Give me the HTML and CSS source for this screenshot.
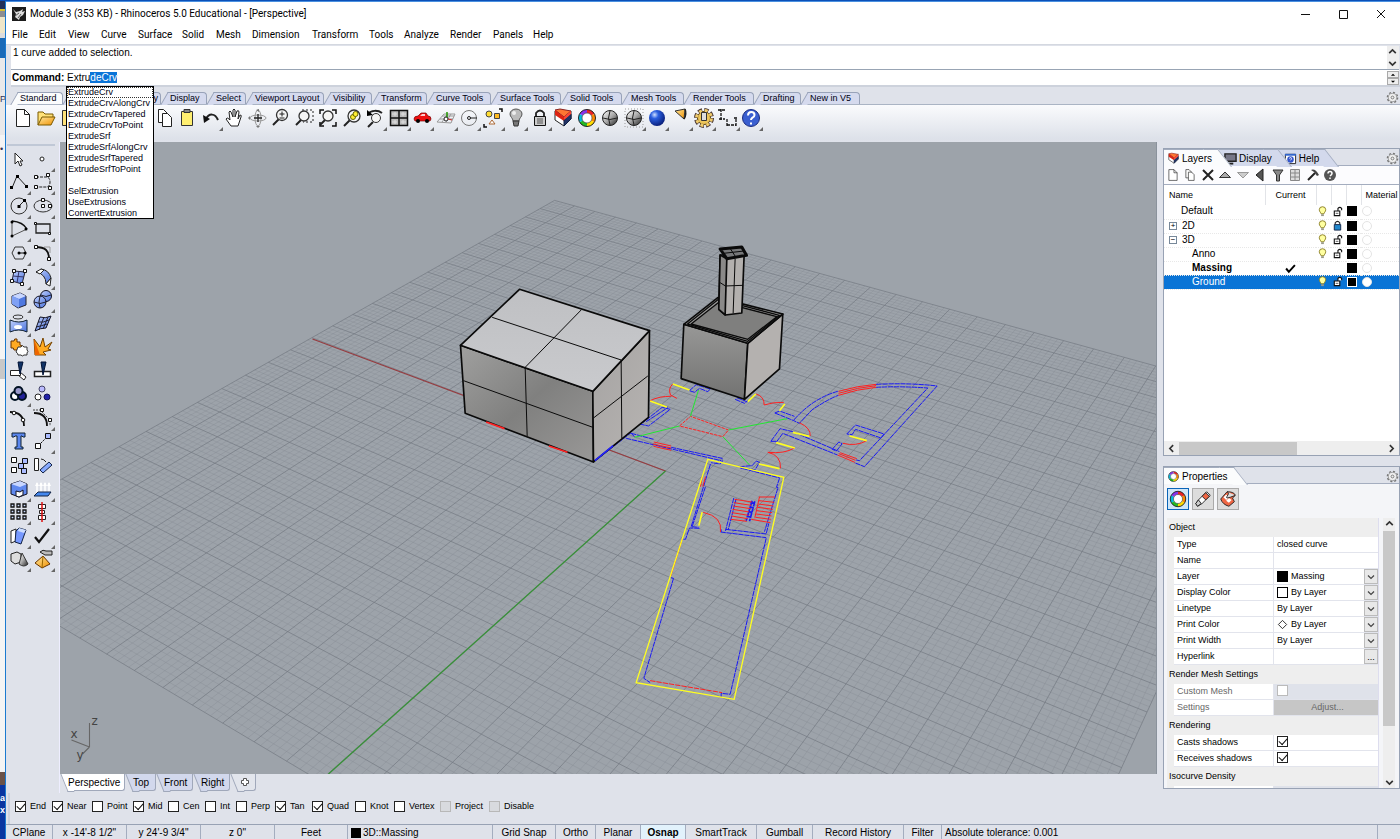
FILE: index.html
```html
<!DOCTYPE html>
<html lang="en">
<head>
<meta charset="utf-8">
<title>Module 3 (353 KB) - Rhinoceros 5.0 Educational - [Perspective]</title>
<link rel="stylesheet" href="styles.css">
</head>
<body>
<svg class="defs" aria-hidden="true">
<defs>
<linearGradient id="gball" x1="0" y1="0" x2="1" y2="1"><stop offset="0" stop-color="#fff"/><stop offset=".5" stop-color="#aaa"/><stop offset="1" stop-color="#222"/></linearGradient>
<radialGradient id="bball" cx=".35" cy=".3" r=".8"><stop offset="0" stop-color="#cfe0ff"/><stop offset=".3" stop-color="#2a5fe0"/><stop offset="1" stop-color="#04146a"/></radialGradient>
<linearGradient id="bface" x1="0" y1="0" x2="1" y2="1"><stop offset="0" stop-color="#c2d2ff"/><stop offset="1" stop-color="#4a72dc"/></linearGradient>
<linearGradient id="gold" x1="0" y1="0" x2="1" y2="1"><stop offset="0" stop-color="#ffe9a0"/><stop offset="1" stop-color="#f09000"/></linearGradient>
<linearGradient id="front" x1="0" y1="0" x2="1" y2="1"><stop offset="0" stop-color="#a0a09f"/><stop offset=".5" stop-color="#80807f"/><stop offset="1" stop-color="#999897"/></linearGradient>
<linearGradient id="boxf" x1="0" y1="0" x2="0" y2="1"><stop offset="0" stop-color="#989897"/><stop offset="1" stop-color="#727271"/></linearGradient>
<linearGradient id="side" x1="0" y1="0" x2="1" y2="1"><stop offset="0" stop-color="#a5a3a2"/><stop offset="1" stop-color="#b7b4b2"/></linearGradient>
<linearGradient id="roof" x1="0" y1="0" x2="0" y2="1"><stop offset="0" stop-color="#bfc0c3"/><stop offset="1" stop-color="#c9cacd"/></linearGradient>
<symbol id="wheel" viewBox="0 0 22 22"><g fill="none" stroke-width="4"><path stroke="#e22" d="M11 4.500a6.500 6.500 0 0 1 5.600 3.250"/><path stroke="#f80" d="M16.600 7.750a6.500 6.500 0 0 1 0 6.500"/><path stroke="#fd0" d="M16.600 14.250A6.500 6.500 0 0 1 11 17.500"/><path stroke="#2b2" d="M11 17.500a6.500 6.500 0 0 1-5.600-3.250"/><path stroke="#0bd" d="M5.400 14.250a6.500 6.500 0 0 1 0-6.500"/><path stroke="#83e" d="M5.400 7.750A6.500 6.500 0 0 1 11 4.500"/></g><circle cx="11" cy="11" r="8.500" fill="none" stroke="#222"/><circle cx="11" cy="11" r="5" fill="#fff" stroke="#444" stroke-width=".7"/></symbol>
<symbol id="layers" viewBox="0 0 22 22"><path d="M3 4l9 5 7-5v8l-7 7-9-6z" fill="#fff" stroke="#222"/><path d="M3 3l5-1 11 2-7 6z" fill="#f73" stroke="#822"/><path d="M3 3l9 7v4L3 8z" fill="#d21"/><path d="M12 13l7-6v5l-7 7z" fill="#236" stroke="#124"/><path d="M12 10l7-6v3l-7 6z" fill="#f43"/></symbol>
<symbol id="cog" viewBox="0 0 14 14"><circle cx="7" cy="7" r="5.500" fill="none" stroke="#777" stroke-width="1.500" stroke-dasharray="2.200 2.100"/><circle cx="7" cy="7" r="4.400" fill="#eee" stroke="#888" stroke-width=".8"/><circle cx="7" cy="7" r="1.500" fill="none" stroke="#777"/></symbol>
<symbol id="bulb" viewBox="0 0 10 12"><path d="M3.500 8.500C3 7 1.500 6 1.500 4a3.500 3.200 0 0 1 7 0c0 2-1.500 3-2 4.500z" fill="#ffffa0" stroke="#887c20"/><path d="M3.500 9h3v2h-3z" fill="#998"/></symbol>
<symbol id="unlock" viewBox="0 0 12 12"><path d="M2.500 5.500h6v5h-6zM6.500 5.500v-3q2-2 4 0v2" fill="#fff" stroke="#111" stroke-width="1.200"/><path d="M4 8h3" stroke="#555"/></symbol>
<symbol id="locked" viewBox="0 0 12 12"><path d="M3.500 5V3q2.500-3 5 0v2" fill="none" stroke="#222" stroke-width="1.200"/><path d="M2.500 5h7v6h-7z" fill="#28c" stroke="#124"/></symbol>
<symbol id="down" viewBox="0 0 10 10"><path d="M2 3.500l3 3 3-3" fill="none" stroke="#444" stroke-width="1.200"/></symbol>
<symbol id="page" viewBox="0 0 22 22"><path d="M4.500 2.500h8l5 5v12h-13z" fill="#fff" stroke="#222"/><path d="M12.500 2.500v5h5" fill="none" stroke="#222"/></symbol>
<symbol id="copy" viewBox="0 0 22 22"><path d="M4.500 2.500h5l4 4v9h-9z" fill="#fff" stroke="#222"/><path d="M8.500 6.500h5l4 4v9h-9z" fill="#fff" stroke="#222"/></symbol>
</defs>
</svg>
<div class="desktop">
<aside class="behind"><span class="peek-p">P</span><span class="peek-dot">•</span><span class="peek-a">a<br>xt</span></aside>
<div class="window">
<header class="titlebar">
<svg class="logo" viewBox="0 0 14 14"><path fill="#1c1c1c" d="M0 0h14v14H0z"/><path d="M1 2l3 3 4-1 3-2-1 3 3-1-2 4-3 2-1 3-4-3 1-3z" fill="#ddd"/><path d="M3 9l4-3M6 11l3-4" stroke="#555"/></svg>
<h1>Module 3 (353 KB) - Rhinoceros 5.0 Educational - [Perspective]</h1>
<div class="winbtns">
<button aria-label="Minimize"><svg viewBox="0 0 12 12"><path d="M2 6.500h9"/></svg></button>
<button aria-label="Maximize"><svg viewBox="0 0 12 12"><path d="M2.500 2.500h8v8h-8z"/></svg></button>
<button aria-label="Close"><svg viewBox="0 0 12 12"><path d="M2 2l8 8M10 2l-8 8"/></svg></button>
</div>
</header>
<nav class="menu"><a href="#">File</a><a href="#">Edit</a><a href="#">View</a><a href="#">Curve</a><a href="#">Surface</a><a href="#">Solid</a><a href="#">Mesh</a><a href="#">Dimension</a><a href="#">Transform</a><a href="#">Tools</a><a href="#">Analyze</a><a href="#">Render</a><a href="#">Panels</a><a href="#">Help</a></nav>
<section class="command">
<div class="history"><p>1 curve added to selection.</p><div class="hscroll"><svg viewBox="0 0 10 10"><path d="M2 6.500l3-3 3 3"/></svg><svg viewBox="0 0 10 10"><path d="M2 3.500l3 3 3-3"/></svg></div></div>
<div class="prompt"><label for="cmd">Command:</label><input id="cmd" type="text" value="ExtrudeCrv" autocomplete="off" spellcheck="false">
<div class="spin"><svg viewBox="0 0 11 6"><path d="M3 4.500h5L5.500 2z"/></svg><svg viewBox="0 0 11 6"><path d="M3 2h5L5.500 4.500z"/></svg></div>
<ul class="complete"><li class="current">ExtrudeCrv</li><li>ExtrudeCrvAlongCrv</li><li>ExtrudeCrvTapered</li><li>ExtrudeCrvToPoint</li><li>ExtrudeSrf</li><li>ExtrudeSrfAlongCrv</li><li>ExtrudeSrfTapered</li><li>ExtrudeSrfToPoint</li><li></li><li>SelExtrusion</li><li>UseExtrusions</li><li>ConvertExtrusion</li></ul>
</div>
</section>
<div class="tooltabs">
<button class="on">Standard</button><button aria-label="CPlanes"></button><button class="tail" aria-label="Visibility set">y</button><button>Display</button><button>Select</button><button>Viewport Layout</button><button>Visibility</button><button>Transform</button><button>Curve Tools</button><button>Surface Tools</button><button>Solid Tools</button><button>Mesh Tools</button><button>Render Tools</button><button>Drafting</button><button>New in V5</button>
<svg class="cog"><use href="#cog"/></svg>
</div>
<div class="toolbar">
<button aria-label="New"><svg viewBox="0 0 22 22"><use href="#page"/></svg></button>
<button aria-label="Open"><svg viewBox="0 0 22 22"><path d="M3 18V5h5l2 2h8v4" fill="#ffe27a" stroke="#7a5a00"/><path d="M3 18l4-8h13l-4 8z" fill="url(#gold)" stroke="#7a5a00"/></svg></button>
<button aria-label="Save"><svg viewBox="0 0 22 22"><path d="M3.500 3.500h15v15h-15z" fill="#ffe27a" stroke="#333"/></svg></button>
<button aria-label="Print"></button><button aria-label="Properties"></button><button aria-label="Cut"></button>
<button aria-label="Copy"><svg viewBox="0 0 22 22"><use href="#copy" x="1"/></svg></button>
<button aria-label="Paste"><svg viewBox="0 0 22 22"><path d="M5.500 4.500h11v14h-11z" fill="#ffef70" stroke="#333"/><path d="M8 2.500h6v3H8z" fill="#888" stroke="#333"/></svg></button>
<button class="fly" aria-label="Undo"><svg viewBox="0 0 22 22"><path d="M6 12c3-6 9-6 12 1" fill="none" stroke="#222" stroke-width="2"/><path d="M3 8l1 8 6-4z" fill="#111"/></svg></button>
<button aria-label="Pan"><svg viewBox="0 0 22 22"><path d="M8 19l-5-7q1-2 3 0l1 1L6 5q1-2 2 0l2 5V3q1-2 2 0v7l2-6q2-1 2 1l-1 7 2-4q2 0 1 2l-3 9z" fill="#fff" stroke="#222"/></svg></button>
<button aria-label="Rotate view"><svg viewBox="0 0 22 22"><g fill="none" stroke="#999"><ellipse cx="11" cy="11" rx="8" ry="3"/><ellipse cx="11" cy="11" rx="3" ry="8"/></g><path d="M11 7v8M7 11h8" stroke="#222" stroke-width="1.300"/><path d="M9 3l3-1v3zM9 19h4l-2 2zM3 9v4L1 11z" fill="#777"/></svg></button>
<button aria-label="Zoom"><svg viewBox="0 0 22 22"><path d="M9 12l-6 6" stroke="#222" stroke-width="2"/><circle cx="12" cy="8" r="5.500" fill="#f5f5f5" stroke="#333" stroke-width="1.300"/><path d="M9.500 7h5M12 4.500v5M9.500 11h5" stroke="#222"/></svg></button>
<button aria-label="Zoom window"><svg viewBox="0 0 22 22"><path d="M8 3h11v12H9" fill="none" stroke="#222" stroke-dasharray="2 2"/><path d="M7 13l-5 5" stroke="#222" stroke-width="2"/><circle cx="10" cy="9" r="5" fill="#f5f5f5" stroke="#333" stroke-width="1.300"/></svg></button>
<button aria-label="Zoom extents"><svg viewBox="0 0 22 22"><path d="M3 7V3h4M15 3h4v4M19 15v4h-4M7 19H3v-4" fill="none" stroke="#111" stroke-width="1.500"/><path d="M8 13l-5 5" stroke="#222" stroke-width="2"/><circle cx="11" cy="9" r="5" fill="#f5f5f5" stroke="#333" stroke-width="1.300"/></svg></button>
<button aria-label="Zoom selected"><svg viewBox="0 0 22 22"><path d="M9 13l-6 6" stroke="#222" stroke-width="2"/><circle cx="13" cy="9" r="6" fill="#f5f5f5" stroke="#333" stroke-width="1.300"/><circle cx="12" cy="10" r="2.500" fill="#fe3" stroke="#660"/><circle cx="14.500" cy="7" r="2.500" fill="#fe3" stroke="#660"/></svg></button>
<button class="fly" aria-label="Undo view"><svg viewBox="0 0 22 22"><path d="M4 7c3-4 10-4 14-1" fill="none" stroke="#222" stroke-width="2"/><path d="M3 3v6l6-1z"/><path d="M9 15l-5 5" stroke="#222" stroke-width="2"/><circle cx="12" cy="11" r="4.500" fill="#f5f5f5" stroke="#333"/></svg></button>
<button class="fly" aria-label="Viewports"><svg viewBox="0 0 22 22"><path d="M2.500 3.500h17v15h-17z" fill="#bbb" stroke="#111" stroke-width="1.500"/><path d="M11 3v16M2 11h18" stroke="#111" stroke-width="1.500"/><path d="M4 7h5M13 7h5M4 15h5M13 15h5M7 5v4M15 5v4M7 13v4M15 13v4" stroke="#ddd"/></svg></button>
<button class="fly" aria-label="Set view"><svg viewBox="0 0 22 22"><path d="M3 12q0-3 4-3l3-3h5l2 3q3 0 3 3l-1 2H4z" fill="#e11" stroke="#700" stroke-width=".7"/><path d="M9 9l2-2h3v2z" fill="#fcc"/><circle cx="7" cy="14" r="2"/><circle cx="16" cy="14" r="2"/></svg></button>
<button class="fly" aria-label="CPlane"><svg viewBox="0 0 22 22"><path d="M2 15L9 7h11l-4 9zM5 12h13M7 9h12M7 15l6-8M11 15l5-8" fill="none" stroke="#999"/><path d="M12 11V5" stroke="#290" stroke-width="1.500"/><circle cx="11" cy="12" r="2" fill="#fff" stroke="#222"/><path d="M13 12l4 1" stroke="#c22"/></svg></button>
<button class="fly" aria-label="Circle center"><svg viewBox="0 0 22 22"><circle cx="11" cy="11" r="7.500" fill="none" stroke="#777"/><circle cx="11" cy="11" r="1.500" fill="none" stroke="#222"/><path d="M12 11h7" stroke="#222"/></svg></button>
<button class="fly" aria-label="Select"><svg viewBox="0 0 22 22"><path d="M17 2h3v3M2 17v3h3" fill="none" stroke="#111" stroke-width="1.500"/><circle cx="7" cy="7" r="3" fill="#fd3" stroke="#444"/><path d="M12.500 6.500h5v5h-5z" fill="#fb2" stroke="#444"/><path d="M13 17l-3-4-3 4z" fill="#fff" stroke="#a63"/></svg></button>
<button class="fly" aria-label="Hide"><svg viewBox="0 0 22 22"><path d="M8 14c0-3-3-4-3-7a6 5 0 0 1 12 0c0 3-3 4-3 7z" fill="#bbb" stroke="#555"/><circle cx="9" cy="6" r="2" fill="#eee"/><path d="M8 14h6l-1 5H9z" fill="#777" stroke="#333"/></svg></button>
<button class="fly" aria-label="Lock"><svg viewBox="0 0 22 22"><path d="M7 9V6q4-5 8 0v3" fill="none" stroke="#222" stroke-width="1.800"/><path d="M5.500 9.500h11v9h-11z" fill="#ccc" stroke="#111"/><path d="M8 12h6M8 14h6M8 16h6" stroke="#555"/></svg></button>
<button class="fly" aria-label="Layers"><svg viewBox="0 0 22 22"><use href="#layers"/></svg></button>
<button class="fly" aria-label="Colors"><svg viewBox="0 0 22 22"><use href="#wheel"/></svg></button>
<button aria-label="Shaded"><svg viewBox="0 0 22 22"><circle cx="11" cy="11" r="7.500" fill="url(#gball)" stroke="#222"/><path d="M4 11q7 3 14 0M11 4q-3 7 0 14" fill="none" stroke="#222"/></svg></button>
<button class="fly" aria-label="Ghosted"><svg viewBox="0 0 22 22"><path d="M2 2h18v18H2z" fill="none" stroke="#999" stroke-dasharray="1 2"/><circle cx="11" cy="11" r="7.500" fill="url(#gball)" stroke="#222"/><path d="M4 11q7 3 14 0M11 4q-3 7 0 14" fill="none" stroke="#222"/></svg></button>
<button class="fly" aria-label="Render"><svg viewBox="0 0 22 22"><circle cx="11" cy="11" r="8" fill="url(#bball)"/></svg></button>
<button class="fly" aria-label="Spotlight"><svg viewBox="0 0 22 22"><path d="M5 4l10-2-1 10z" fill="url(#gold)" stroke="#333"/><path d="M15 2q2 5-1 10" fill="none" stroke="#222" stroke-width="1.500"/></svg></button>
<button class="fly" aria-label="Options"><svg viewBox="0 0 22 22"><circle cx="11" cy="11" r="7.500" fill="none" stroke="#433" stroke-width="5" stroke-dasharray="3.900 2"/><circle cx="11" cy="11" r="6.500" fill="#edc55a" stroke="#5a4210"/><circle cx="11" cy="11" r="7.500" fill="none" stroke="#f0cc6c" stroke-width="3" stroke-dasharray="2.900 3" stroke-dashoffset="-.5"/><path d="M8.500 5.500h5v8h-5z" fill="#ddd" stroke="#333"/></svg></button>
<button class="fly" aria-label="Dimension"><svg viewBox="0 0 22 22"><path d="M4 2v11M1 3h7M2 12h6M10 12v8M19 12v8M10 18h9M17 11h4" fill="none" stroke="#111" stroke-width="1.300" stroke-dasharray="3 1"/></svg></button>
<button class="fly" aria-label="Help"><svg viewBox="0 0 22 22"><circle cx="11" cy="11" r="8.500" fill="#3a5fd0" stroke="#1a2c80"/><path d="M8 8.500q0-3.500 3.200-3.500 3.300 0 3.300 3 0 1.500-2 2.700-1.500 1-1.500 2.300M11 15.500v2" fill="none" stroke="#fff" stroke-width="2"/></svg></button>
</div>
<main class="work">
<div class="sidebar">
<button aria-label="Pointer"><svg viewBox="0 0 22 22"><path d="M7 5v11l3-3 2 5 2-1-2-4h3z" fill="#fff" stroke="#222"/></svg></button>
<button class="fly" aria-label="Point"><svg viewBox="0 0 22 22"><circle cx="10" cy="11" r="2" fill="#fff" stroke="#222"/></svg></button>
<button class="fly" aria-label="Polyline"><svg viewBox="0 0 22 22"><path d="M4 17L9 5l10 11" fill="none" stroke="#222"/><path d="M2 15h3v3H2zM8 4h3v3H8zM17 14h3v3h-3z"/></svg></button>
<button class="fly" aria-label="Curve"><svg viewBox="0 0 22 22"><path d="M4 6h10q4 0 4 5t-4 5H4" fill="none" stroke="#222" stroke-dasharray="3 1"/><path d="M2.500 4.500h3v3h-3zM14.500 2.500h3v3h-3zM2.500 14.500h3v3h-3zM16.500 15.500h3v3h-3z" fill="#fff" stroke="#111"/></svg></button>
<button class="fly" aria-label="Circle"><svg viewBox="0 0 22 22"><circle cx="11" cy="11" r="8" fill="none" stroke="#333"/><path d="M11 11l5-5" stroke="#222"/><path d="M9.500 10h3v3h-3zM15 4h3v3h-3z"/></svg></button>
<button class="fly" aria-label="Ellipse"><svg viewBox="0 0 22 22"><ellipse cx="11" cy="11" rx="9" ry="6" fill="none" stroke="#333"/><path d="M9.500 9.500h3v3h-3zM9.500 3.500h3v3h-3zM16.500 9.500h3v3h-3z" fill="#fff" stroke="#111"/></svg></button>
<button class="fly" aria-label="Arc"><svg viewBox="0 0 22 22"><path d="M4 3v15l15-7" fill="none" stroke="#555"/><path d="M4 3q11 1 15 8" fill="none" stroke="#111" stroke-width="1.300"/><circle cx="4" cy="4" r="1.500"/><circle cx="4" cy="18" r="1.500"/><circle cx="18" cy="11" r="1.500"/></svg></button>
<button class="fly" aria-label="Rectangle"><svg viewBox="0 0 22 22"><path d="M4 6h14v9H4z" fill="none" stroke="#222" stroke-width="1.300"/><path d="M2.500 4.500h2v2h-2zM16.500 14.500h2v2h-2z" fill="#fff" stroke="#111"/></svg></button>
<button class="fly" aria-label="Polygon"><svg viewBox="0 0 22 22"><path d="M4 11l3-6h8l3 6-3 6H7z" fill="none" stroke="#333"/><path d="M11 11h6" stroke="#111"/><circle cx="11" cy="11" r="1.500"/><circle cx="17" cy="11" r="1.500"/></svg></button>
<button class="fly" aria-label="Fillet"><svg viewBox="0 0 22 22"><path d="M12 5h6v6" fill="none" stroke="#999"/><path d="M3 5c11 0 14 4 14 12" fill="none" stroke="#111" stroke-width="1.800"/><path d="M2.500 3.500h3v3h-3zM15.500 15.500h3v3h-3z" fill="#fff" stroke="#111"/></svg></button>
<button class="fly" aria-label="Surface"><svg viewBox="0 0 22 22"><path d="M6 5l11 1-3 12-10-3z" fill="url(#bface)" stroke="#223"/><path d="M11 5l-2 12M5 10l11 1" stroke="#336"/><path d="M4.500 3.500h3v3h-3zM15.500 3.500h3v3h-3zM2.500 13.500h3v3h-3zM12.500 16.500h3v3h-3z" fill="#fff" stroke="#111"/></svg></button>
<button class="fly" aria-label="Sweep"><svg viewBox="0 0 22 22"><path d="M4 6q3 0 5-3 8 1 10 9l-5 6q0-10-10-12z" fill="url(#bface)" stroke="#222"/><path d="M4 6l5-3 3 1-4 4zM14 18l5-6-1 8z" fill="#fff" stroke="#222"/></svg></button>
<button class="fly" aria-label="Box"><svg viewBox="0 0 22 22"><path d="M4 7l8-3 6 3v9l-8 3-6-4z" fill="#4f78e0" stroke="#223"/><path d="M4 7l8-3 6 3-7 3z" fill="#c8d6ff"/><path d="M4 7l7 3v9l-7-4z" fill="#7fa0f4"/></svg></button>
<button class="fly" aria-label="Boolean"><svg viewBox="0 0 22 22"><circle cx="14" cy="7" r="5.500" fill="url(#bface)" stroke="#112"/><circle cx="8" cy="13" r="6" fill="url(#bface)" stroke="#112"/><path d="M2 13q6 3 12 0M8 7q-2 6 0 12M9 6q5 3 10 0" fill="none" stroke="#223"/></svg></button>
<button class="fly" aria-label="Loft"><svg viewBox="0 0 22 22"><ellipse cx="10" cy="4" rx="5" ry="2" fill="none" stroke="#333"/><path d="M2 7q9 4 17 0v12q-8-4-17 0z" fill="url(#bface)" stroke="#123"/><ellipse cx="10" cy="14" rx="4" ry="2" fill="#fff"/></svg></button>
<button class="fly" aria-label="Mesh"><svg viewBox="0 0 22 22"><path d="M8 4q5 2 11-1l-5 12q-6 0-11 3z" fill="url(#bface)" stroke="#112"/><path d="M6 9q5 1 11-2M4 14q5-1 11-3M12 4l-5 13M16 4l-5 12" fill="none" stroke="#223"/></svg></button>
<button aria-label="Join"><svg viewBox="0 0 22 22"><path d="M3 5h3q0-3 3-2v3h3v3q3 0 2 3h-3l-2 2H6q0-3-3-2z" fill="#fa2" stroke="#630"/><path d="M10 11h3q1-3 3 0h3v3q2 1 0 3v2h-3q-2 2-3 0h-3q0-2-2-3z" fill="#fff" stroke="#333"/></svg></button>
<button aria-label="Explode"><svg viewBox="0 0 22 22"><path d="M2 3l6 8 3-9 2 9 7-5-4 7 3 1-8 2 3 3H3z" fill="#fa2" stroke="#740"/><path d="M2 3l1 16h5z" fill="#e60"/></svg></button>
<button aria-label="Trim"><svg viewBox="0 0 22 22"><path d="M2.500 10.500h10v5h-10zM12 12l6 5-2 3-6-5" fill="#fff" stroke="#222"/><path d="M10 2h5l-3 12z" fill="#136" stroke="#013"/></svg></button>
<button aria-label="Split"><svg viewBox="0 0 22 22"><path d="M2.500 11.500h16v5h-16z" fill="#fff" stroke="#222" stroke-width="1.500"/><path d="M9 2h5l-3 13z" fill="#136" stroke="#013"/></svg></button>
<button class="fly" aria-label="Group"><svg viewBox="0 0 22 22"><g stroke="#012" stroke-width="2"><circle cx="7" cy="13" r="4" fill="#fff"/><circle cx="14" cy="13" r="4" fill="#229"/><circle cx="10.500" cy="8" r="4" fill="#99c"/></g></svg></button>
<button aria-label="Ungroup"><svg viewBox="0 0 22 22"><circle cx="10" cy="6" r="3" fill="#bbf" stroke="#446"/><circle cx="6" cy="14" r="3" fill="#fff" stroke="#222"/><circle cx="15" cy="14" r="3" fill="#22a" stroke="#115"/></svg></button>
<button aria-label="Edit points"><svg viewBox="0 0 22 22"><path d="M2 5q14 0 14 14" fill="none" stroke="#111" stroke-width="1.800"/><circle cx="6" cy="6" r="1.800" fill="#fff" stroke="#111"/><circle cx="15" cy="13" r="1.800" fill="#fff" stroke="#111"/></svg></button>
<button class="fly" aria-label="Control points"><svg viewBox="0 0 22 22"><path d="M2 6q13 0 13 13" fill="none" stroke="#111" stroke-width="1.800"/><path d="M1 3h7l10 10v6" fill="none" stroke="#444" stroke-dasharray="2 1"/><path d="M8.500 1.500h3v3h-3zM16.500 11.500h3v3h-3z" fill="#fff" stroke="#111"/></svg></button>
<button aria-label="Text"><svg viewBox="0 0 22 22"><path d="M4 3h13v4h-2l-1-1h-1v11h2v2H7v-2h2V6H7L6 7H4z" fill="#5b86ee" stroke="#123"/></svg></button>
<button class="fly" aria-label="Move"><svg viewBox="0 0 22 22"><path d="M13.500 3.500h5v5h-5z" fill="#abf" stroke="#111"/><path d="M3.500 13.500h5v5h-5z" fill="#fff" stroke="#111"/><path d="M9 13l4-4" stroke="#111" stroke-dasharray="2 1"/></svg></button>
<button aria-label="Copy objects"><svg viewBox="0 0 22 22"><path d="M3.500 3.500h5v5h-5zM3.500 13.500h5v5h-5z" fill="#fff" stroke="#111"/><path d="M14.500 4.500h5v5h-5zM10.500 9.500h5v5h-5zM13.500 14.500h5v5h-5z" fill="#abf" stroke="#111"/></svg></button>
<button aria-label="Rotate"><svg viewBox="0 0 22 22"><path d="M2.500 4.500h4v12h-4z" fill="#fff" stroke="#222"/><path d="M8 16l9-8 3 3-9 8z" fill="#8af" stroke="#124"/><path d="M9 5q3 0 5 3" fill="none" stroke="#222"/></svg></button>
<button class="fly" aria-label="Solid edit"><svg viewBox="0 0 22 22"><path d="M3 6l9-3 7 3v10l-8 3-8-3z" fill="#5f88ee" stroke="#112"/><path d="M3 6l9-3 7 3-7 3z" fill="#c8d6ff"/><path d="M8 13l4 1 3-2v5l-4 2-3-1z" fill="#fff" stroke="#112"/></svg></button>
<button class="fly" aria-label="Project"><svg viewBox="0 0 22 22"><path d="M5 15V5M9 15V5M13 15V5M17 15V5" stroke="#fff" stroke-width="1.500"/><path d="M3 8l2-4 2 4zM7 8l2-4 2 4zM11 8l2-4 2 4zM15 8l2-4 2 4z" fill="#fff"/><path d="M2 18l4-4h13l-3 4z" fill="#48e" stroke="#124"/></svg></button>
<button class="fly" aria-label="Array"><svg viewBox="0 0 22 22"><g fill="#cdf" stroke="#111" stroke-width="1.300"><path d="M3 3h3v3H3zM9 3h3v3H9zM15 3h3v3h-3zM3 9h3v3H3zM9 9h3v3H9zM15 9h3v3h-3zM3 15h3v3H3zM9 15h3v3H9zM15 15h3v3h-3z"/></g></svg></button>
<button class="fly" aria-label="Align"><svg viewBox="0 0 22 22"><path d="M6.500 3.500h7v4h-7zM7.500 9.500h5v3h-5zM6.500 14.500h7v4h-7z" fill="#fff" stroke="#222"/><path d="M10 1v20" stroke="#d11" stroke-width="1.500"/></svg></button>
<button class="fly" aria-label="Orient"><svg viewBox="0 0 22 22"><path d="M3 6l5-2v12l-5 2z" fill="#fff" stroke="#222"/><path d="M8 6l3-3 7 2-5 14-6-2z" fill="#79f" stroke="#124"/><path d="M11 3l7 2-2 3-6-2z" fill="#cdf"/></svg></button>
<button class="fly" aria-label="Check"><svg viewBox="0 0 22 22"><path d="M3 12l4 5L17 4" fill="none" stroke="#111" stroke-width="2.200"/></svg></button>
<button class="fly" aria-label="Primitives"><svg viewBox="0 0 22 22"><path d="M3 6l6-2 4 2v8l-6 2-4-3z" fill="#ddd" stroke="#222"/><path d="M14 5l6 11q-4 4-9 0z" fill="url(#gball)" stroke="#333"/></svg></button>
<button class="fly" aria-label="Render tools"><svg viewBox="0 0 22 22"><path d="M3 15l8-7 7 8-8 4z" fill="url(#gold)" stroke="#630"/><path d="M11 8l-1 12" stroke="#960"/><path d="M8 4q3-3 6-1h6v4h-7z" fill="#bbb" stroke="#222"/></svg></button>
</div>
<div class="center">
<svg class="viewport" viewBox="60 142 1097 632" preserveAspectRatio="xMidYMid slice" role="img" aria-label="Perspective viewport">
<rect x="60" y="142" width="1097" height="632" fill="#9da3aa"/>
<path id="minor" fill="none" stroke="#858b92" stroke-width="1" stroke-opacity=".36"/>
<path id="major" fill="none" stroke="#747982" stroke-width="1" stroke-opacity=".7"/>
<path d="M666 471L313 339" stroke="#963c40" stroke-width="1.300"/><path d="M666 471L329 774" stroke="#389038" stroke-width="1.300"/>
<g fill="none" stroke="#666" stroke-width="1.100"><path d="M90 747v-24M90 747l-18-7M90 747l-7 7"/></g>
<g class="axis"><text x="92" y="725">z</text><text x="71" y="738">x</text><text x="77" y="759">y</text></g>
<g transform="translate(600 370) scale(.3333)" fill="none" stroke-width="3">
<g stroke="#1818f4" stroke-dasharray="16 2">
<path d="M0 262L95 188M80 205L365 272M95 190L162 208M215 232L368 265V275L362 282L335 278M95 190l10 10M120 162L147 168L212 118L188 112L130 158M140 155l65-42"/>
<path d="M270 62L290 44L332 57L325 65L300 55L285 67zM407 88l28 12 10-8M412 83l30 12"/>
<path d="M526 129L583 152L600 160L637 120Q690 85 717 76M583 150Q640 85 715 64M526 129l14-6 45 16M830 43Q930 38 1013 48L795 290L765 278M830 52Q900 48 985 54L780 272L770 270"/>
<path d="M514 214L542 176L580 185L720 245M530 217L550 190L714 255M514 214h16M698 238l20-22 10 5-17 22z"/>
<path d="M742 192L768 165L854 192L845 204L768 178L758 194z"/>
<path d="M420 290l38-3 12-14 10 4-13 22-44-5 118 30M540 325l-9 27 8 2"/>
<path d="M333 282L275 470L297 472M318 350l-40 120M300 475L270 474L258 508L248 508M222 625L133 925L152 938M222 625l-8 -2M500 505L392 973L365 970V980M535 355L495 485"/>
<path d="M403 384L378 483M410 386L386 480M378 478L500 492L508 460M363 486L500 503M365 478v8"/>
<path d="M458 392l-18 60M466 394l-16 60M453 397l12 4M450 410l12 4M446 424l12 4M442 438l12 4" stroke-width="5"/>
</g>
<g stroke="#ff2020">
<path d="M240 168L273 139L387 180L370 200z" stroke-dasharray="10 3"/>
<path d="M160 222l55 12M162 229l53 12M163 216l52 12M220 42Q205 55 213 75L232 85M152 92Q180 78 215 79M470 72Q495 80 494 105Q520 96 553 97M600 158Q635 175 632 198M505 247Q545 255 543 295M585 234Q555 252 505 247M802 212Q770 230 730 220"/>
<path d="M717 76Q775 57 830 52M717 64Q775 47 830 43M717 70Q775 52 830 47M714 255l52 22M722 248l50 18M718 251l50 20"/>
<path d="M308 320L303 350M318 320l-8 30M248 508L213 620M311 427Q370 440 363 486"/><path d="M152 932L368 968" stroke-dasharray="16 3"/>
<path d="M405 388l52 8M403 398l52 8M401 408l52 8M399 418l50 8M397 428l50 8M396 438l48 8M394 448l48 6M478 381h48M478 392l46 5M476 402l46 6M474 412l46 6M472 422l46 6M470 432l46 6M468 442l46 6M455 448l58 10M480 381l-14 62"/>
</g>
<g stroke="#20e830"><path d="M273 139L297 60M387 180L563 146M370 200L450 285M240 168L105 202"/></g>
<g stroke="#ffff20" stroke-width="5"><path d="M220 42l50 18M152 93l50 18M445 95l24-23M540 122l16-20M580 187l50 12M530 218l56 16M750 198l52 14M478 282l62 14M308 427l-10 40"/><path d="M325 268L553 322L404 988L110 938z" stroke-width="4"/></g>
</g>
<g transform="translate(440 230) scale(.3333)" fill="none" stroke="#0a0a0a" stroke-width="5" stroke-linejoin="round">
<path d="M63 346L460 484L462 696L77 550z" fill="url(#front)"/>
<path d="M460 484L630 302L627 562L462 696z" fill="url(#side)"/>
<path d="M240 178L630 302L460 484L63 346z" fill="url(#roof)"/>
<g stroke-width="3"><path d="M158 262L545 390L547 625M425 240L257 412L263 618M72 452L460 592M462 564L625 438"/></g>
<path d="M140 576l55 20M328 648l56 19" stroke="#f22"/><path d="M466 692l55-45" stroke="#22f"/>
<path d="M733 283L925 340L915 508L725 446z" fill="url(#boxf)"/>
<path d="M925 340L1030 252L1020 417L915 508z" fill="#b4b1af"/>
<path d="M733 283L835 203L1030 252L925 340z" fill="#9c9c9b"/>
<path d="M755 282L840 215L1012 260L925 328z" fill="#7f7f7e" stroke-width="4"/>
<path d="M744 282L837 208L1020 256L925 334z" stroke-width="4"/>
<path d="M842 75L838 238L857 255L907 249L914 75z" fill="#b3b0ae" stroke-width="5"/>
<path d="M842 75L838 238L857 255L862 86z" fill="#8a8988" stroke-width="5"/>
<path d="M887 86L881 250M842 158L858 168L910 166" stroke-width="3"/>
<path d="M842 57L907 51L921 76L862 86z" fill="#77787a" stroke-width="9"/><path d="M852 70l62-7M872 55l18 28" stroke-width="3"/>
</g>
</svg>
<div class="viewtabs"><button class="on">Perspective</button><button>Top</button><button>Front</button><button>Right</button><button aria-label="Add viewport"><svg viewBox="0 0 10 10"><path d="M3.500 1.500h3v2h2v3h-2v2h-3v-2h-2v-3h2z" fill="#fff" stroke="#555"/></svg></button></div>
</div>
<aside class="panels">
<section class="panel layers">
<div class="ptabs"><button class="on"><svg><use href="#layers"/></svg>Layers</button><button><svg viewBox="0 0 14 14"><path d="M1 2h12v8H1z" fill="#778" stroke="#222" stroke-width="1.500"/><path d="M4 12.500h6" stroke="#222" stroke-width="2"/></svg>Display</button><button><svg viewBox="0 0 14 14"><path d="M1.500 2.500h11v10h-11z" fill="#fff" stroke="#222"/><path d="M1 2h12v2H1z" fill="#36c"/><circle cx="7" cy="8" r="3.500" fill="#35c"/><path d="M6 7q0-1 1-1t1 1q0 1-1 2" stroke="#fff" fill="none"/></svg>Help</button><svg class="cog"><use href="#cog"/></svg></div>
<div class="ptools">
<button aria-label="New layer"><svg><use href="#page"/></svg></button>
<button aria-label="New sublayer"><svg><use href="#copy"/></svg></button>
<button aria-label="Delete"><svg viewBox="0 0 14 14"><path d="M2 2l10 10M12 2L2 12" stroke="#222" stroke-width="2"/></svg></button>
<button aria-label="Up"><svg viewBox="0 0 14 14"><path d="M1.500 9.500L7 4l5.500 5.500z" fill="#aaa" stroke="#333"/></svg></button>
<button aria-label="Down"><svg viewBox="0 0 14 14"><path d="M1.500 4.500L7 10l5.500-5.500z" fill="#ccc" stroke="#999"/></svg></button>
<button aria-label="Left"><svg viewBox="0 0 14 14"><path d="M10 1v12L3 7z" fill="#555" stroke="#222"/></svg></button>
<button aria-label="Filter"><svg viewBox="0 0 14 14"><path d="M2 2h10L8.500 7v6h-3V7z" fill="#888" stroke="#333"/></svg></button>
<button aria-label="Columns"><svg viewBox="0 0 14 14"><path d="M2.500 1.500h9v11h-9zM2 5h9M2 9h9M7 2v10" fill="#ddd" stroke="#888"/></svg></button>
<button aria-label="Tools"><svg viewBox="0 0 14 14"><path d="M2 12l7-7" stroke="#222" stroke-width="2"/><path d="M5 2q4-2 8 5l-2 1-3-4z" fill="#444"/></svg></button>
<button aria-label="Help"><svg viewBox="0 0 14 14"><circle cx="7" cy="7" r="6" fill="#555"/><path d="M5 5.500Q5 3.500 7 3.500t2 2q0 1-2 2.500M7 9.500v1.500" fill="none" stroke="#fff" stroke-width="1.500"/></svg></button>
</div>
<table>
<colgroup><col class="c-name"><col class="c-cur"><col class="c-i"><col class="c-i"><col class="c-i"><col></colgroup>
<thead><tr><th>Name</th><th class="mid">Current</th><th></th><th></th><th></th><th class="mat">Material</th></tr></thead>
<tbody>
<tr><td class="l1">Default</td><td></td><td><svg><use href="#bulb"/></svg></td><td><svg><use href="#unlock"/></svg></td><td><i class="sw"></i></td><td><i class="ball"></i></td></tr>
<tr><td><button class="tw" aria-label="Expand 2D">+</button>2D</td><td></td><td><svg><use href="#bulb"/></svg></td><td><svg><use href="#locked"/></svg></td><td><i class="sw"></i></td><td><i class="ball"></i></td></tr>
<tr><td><button class="tw" aria-label="Collapse 3D">−</button>3D</td><td></td><td><svg><use href="#bulb"/></svg></td><td><svg><use href="#unlock"/></svg></td><td><i class="sw"></i></td><td><i class="ball"></i></td></tr>
<tr><td class="l2">Anno</td><td></td><td><svg><use href="#bulb"/></svg></td><td><svg><use href="#unlock"/></svg></td><td><i class="sw"></i></td><td><i class="ball"></i></td></tr>
<tr><td class="l2 strong">Massing</td><td class="mid"><svg viewBox="0 0 10 10"><path d="M1 5l2.500 3L9 2" fill="none" stroke="#000" stroke-width="1.800"/></svg></td><td></td><td></td><td><i class="sw"></i></td><td><i class="ball"></i></td></tr>
<tr class="sel"><td class="l2">Ground</td><td></td><td><svg><use href="#bulb"/></svg></td><td><svg><use href="#unlock"/></svg></td><td><i class="sw"></i></td><td><i class="ball"></i></td></tr>
</tbody>
</table>
<div class="xscroll"><svg viewBox="0 0 10 10"><path d="M6.500 2l-3 3 3 3"/></svg><i></i><svg viewBox="0 0 10 10"><path d="M3.500 2l3 3-3 3"/></svg></div>
</section>
<section class="panel props">
<div class="ptabs"><button class="on"><svg><use href="#wheel"/></svg>Properties</button><svg class="cog"><use href="#cog"/></svg></div>
<div class="ptypes">
<button class="on" aria-label="Object"><svg><use href="#wheel"/></svg></button>
<button aria-label="Material"><svg viewBox="0 0 22 22"><path d="M3 16l3-4 9-9 4 4-9 9-5 3z" fill="#fff" stroke="#222"/><path d="M10 8l4-4 4 4-4 4z" fill="#e64" stroke="#222"/><path d="M3 16l3-4 3 4-4 3z" fill="#ccc" stroke="#222"/></svg></button>
<button aria-label="Texture"><svg viewBox="0 0 22 22"><path d="M3 11l7-8q8 0 9 4l-3 3 2 4-6 5q-7-2-9-8z" fill="#e64" stroke="#222"/><path d="M6 9l3 3 3-3-3-3zM12 15l3-3-3-2-3 3z" fill="#fff"/><path d="M10 3q3 1 0 5t9-1" fill="#ddd" stroke="#222"/></svg></button>
</div>
<div class="pbody">
<div class="rows">
<h2>Object</h2>
<div class="row"><span>Type</span><div>closed curve</div></div>
<div class="row"><label for="nm">Name</label><input id="nm" type="text"></div>
<div class="row"><label for="s1">Layer</label><div class="pick"><i class="sw"></i><select id="s1"><option>Massing</option></select><b><svg><use href="#down"/></svg></b></div></div>
<div class="row"><label for="s2">Display Color</label><div class="pick"><i class="sw open"></i><select id="s2"><option>By Layer</option></select><b><svg><use href="#down"/></svg></b></div></div>
<div class="row"><label for="s3">Linetype</label><div class="pick"><select id="s3"><option>By Layer</option></select><b><svg><use href="#down"/></svg></b></div></div>
<div class="row"><label for="s4">Print Color</label><div class="pick"><svg class="dia" viewBox="0 0 12 12"><path d="M6 1.500L10.500 6 6 10.500 1.500 6z" fill="#fff" stroke="#222"/></svg><select id="s4"><option>By Layer</option></select><b><svg><use href="#down"/></svg></b></div></div>
<div class="row"><label for="s5">Print Width</label><div class="pick"><select id="s5"><option>By Layer</option></select><b><svg><use href="#down"/></svg></b></div></div>
<div class="row"><span>Hyperlink</span><div class="pick end"><button aria-label="Browse">...</button></div></div>
<h2>Render Mesh Settings</h2>
<div class="row off"><label for="cm">Custom Mesh</label><div><input id="cm" type="checkbox" disabled></div></div>
<div class="row off"><span>Settings</span><button class="adjust" disabled>Adjust...</button></div>
<h2>Rendering</h2>
<div class="row"><label for="cs">Casts shadows</label><div><input id="cs" type="checkbox" checked></div></div>
<div class="row"><label for="rs">Receives shadows</label><div><input id="rs" type="checkbox" checked></div></div>
<h2>Isocurve Density</h2>
<div class="row off"><span></span><div></div></div>
</div>
<div class="yscroll"><svg viewBox="0 0 10 10"><path d="M2 6.500l3-3 3 3"/></svg><i></i><svg viewBox="0 0 10 10"><path d="M2 3.500l3 3 3-3"/></svg></div>
</div>
</section>
</aside>
</main>
<div class="osnap">
<label><input type="checkbox" checked>End</label><label><input type="checkbox" checked>Near</label><label><input type="checkbox">Point</label><label><input type="checkbox" checked>Mid</label><label><input type="checkbox">Cen</label><label><input type="checkbox">Int</label><label><input type="checkbox">Perp</label><label><input type="checkbox" checked>Tan</label><label><input type="checkbox" checked>Quad</label><label><input type="checkbox">Knot</label><label><input type="checkbox">Vertex</label><label><input type="checkbox" class="dim">Project</label><label><input type="checkbox" class="dim">Disable</label>
</div>
<footer class="status"><button>CPlane</button><span>x -14'-8 1/2"</span><span>y 24'-9 3/4"</span><span>z 0"</span><span>Feet</span><button class="lay"><i class="sw"></i>3D::Massing</button><button>Grid Snap</button><button>Ortho</button><button>Planar</button><button class="on">Osnap</button><button>SmartTrack</button><button>Gumball</button><button>Record History</button><button>Filter</button><span class="tol">Absolute tolerance: 0.001</span><span></span></footer>
</div>
</div>
<script src="app.js"></script>
</body>
</html>
```
FILE: styles.css
```css
* { box-sizing: border-box; }
body { margin: 0; font: 9px/11px "Liberation Sans", Arial, sans-serif; color: #000; background: #dfe2ea; }
button, input, select { font: inherit; color: inherit; margin: 0; padding: 0; border: 0; background: none; border-radius: 0; }
a { color: inherit; text-decoration: none; }
ul, p, h1, h2 { margin: 0; padding: 0; font-size: inherit; font-weight: 400; }
svg { display: block; }
.defs { position: absolute; width: 0; height: 0; }

.desktop { display: flex; height: 100vh; min-height: 640px; border-top: 1px solid #0a50b8; }
.behind { flex: 0 0 5px; position: relative; overflow: hidden; color: #335;
  background: linear-gradient(#223058 0 8px, #d8c030 8px 10px, #8e8e90 10px 16px, #efe6c8 16px 32px, #ddd 32px 37px, #1a6ab8 37px 57px, #e9e9ea 57px 134px, #f4f4f4 134px 358px, #c8c8c8 358px 378px, #f4f4f4 378px 771px, #6a5248 771px 784px, #0a35a0 784px); }
.behind span { position: absolute; left: 0; }
.peek-p { top: 93px; }
.peek-dot { top: 143px; }
.peek-a { top: 791px; color: #fff; font-weight: 700; line-height: 12px; }
.window { flex: 1; min-width: 0; display: flex; flex-direction: column; border-left: 1px solid #1a7ad0; background: linear-gradient(#dfe2ea 0 104px, #fafbfd 104px, #dde1e9 138px, #dfe2ea 140px); }

.titlebar { display: flex; align-items: center; gap: 4px; flex: 0 0 25px; padding-left: 6px; background: #fff; border-top: 1px solid #4a90e0; }
.titlebar .logo { width: 14px; height: 14px; }
.titlebar h1 { font: 10px/14px Roboto, sans-serif; color: #000; flex: 1; }
.winbtns { display: flex; }
.winbtns button { width: 38px; height: 24px; display: grid; place-items: center; }
.winbtns svg { width: 12px; height: 12px; fill: none; stroke: #111; }
.menu { flex: 0 0 18px; display: grid; grid-template-columns: 27px 29px 33px 37px 44px 34px 36px 60px 57px 35px 46px 43px 40px auto; justify-content: start; align-items: center; padding-left: 6px; background: #fff; font: 10px/14px Roboto, sans-serif; color: #000; }

.command { flex: 0 0 41px; padding: 1px 1px 0 5px; border-top: 1px solid #d4d8e0; font-size: 10px; line-height: 12px; }
.history { display: flex; justify-content: space-between; height: 24px; background: #fff; border-bottom: 1px solid #98a4b4; }
.history p { padding: 1px 2px; }
.hscroll { width: 12px; background: #eee; display: flex; flex-direction: column; justify-content: space-between; }
.hscroll svg, .xscroll svg, .yscroll svg { width: 11px; height: 11px; fill: none; stroke: #333; stroke-width: 1.5; }
.prompt { position: relative; display: flex; align-items: center; height: 15px; padding-left: 1px; background: #fff; }
.prompt label { font-weight: 700; width: 55px; }
.prompt input { flex: 1; min-width: 0; height: 14px; outline: 0; line-height: 12px; }
.prompt input::selection { background: #0a74d8; color: #fff; }
.spin { width: 12px; }
.spin svg { width: 12px; height: 7px; border: 1px solid #aaa; background: #eee; }
.complete { position: absolute; z-index: 5; left: 55px; top: 16px; width: 88px; list-style: none; background: #fff; border: 1px solid #000; font-size: 9px; line-height: 11px; color: #001; }
.complete li { height: 11px; line-height: 10px; padding-left: 1px; white-space: nowrap; }
.complete li:last-child { height: 10px; }
.complete .current { outline: 1px dotted #333; outline-offset: -1px; }

.tooltabs { flex: 0 0 19px; display: grid; grid-template-columns: 52px 45px 53px 46px 39px 78px 48px 55px 64px 70px 61px 62px 70px 47px 59px 1fr; align-items: end; margin-left: 5px; padding-top: 4px; border-top: 2px solid #cdd2dc; border-bottom: 1px solid #aab4c4; }
.tooltabs button { position: relative; z-index: 0; height: 12px; margin-left: 7px; padding-left: 2px; text-align: left; white-space: nowrap; color: #001; background: #d5daee; border: 1px solid #98a2b8; border-width: 1px 1px 0 0; border-radius: 0 4px 0 0; }
.tooltabs button::before { content: ""; position: absolute; left: -4px; top: -1px; width: 6px; height: 12px; border: 1px solid #98a2b8; border-width: 1px 0 0 1px; background: inherit; transform: skewX(-30deg); z-index: -1; }
.tooltabs .tail { text-align: right; padding-right: 2px; }
.tooltabs .on, .ptabs .on { background: #fbfcfd; }
.tooltabs .cog { justify-self: end; width: 13px; height: 13px; margin-right: 1px; }
.toolbar { flex: 0 0 36px; display: grid; grid-template-columns: repeat(32, 1fr); width: 752px; margin-left: 5px; justify-items: center; align-items: start; padding-top: 2px; }
.toolbar button, .sidebar button { position: relative; width: 22px; height: 22px; }
.toolbar svg, .sidebar svg { width: 22px; height: 22px; }
.fly::after { content: ""; position: absolute; right: -1px; bottom: -2px; border: 2px solid #666; border-top-color: transparent; border-left-color: transparent; }

.work { flex: 1; min-height: 0; display: flex; padding-top: 1px; }
.sidebar { flex: 0 0 48px; align-self: flex-start; height: 427px; display: grid; grid-template-columns: 24px 24px; grid-template-rows: repeat(18, 1fr); margin: 2px 4px 0 1px; padding-top: 1px; border-top: 2px solid #c0c8d6; align-items: center; justify-items: center; }
.center { flex: 1; min-width: 0; display: flex; flex-direction: column; border-left: 1px solid #eef; padding-bottom: 1px; }
.viewport { flex: 1; min-height: 0; width: 100%; border-right: 1px solid #8a929c; }
.axis { font: 12px "DejaVu Sans", sans-serif; fill: #444; }
.viewtabs { flex: 0 0 18px; display: grid; grid-template-columns: 65px 31px 37px 37px 26px; align-items: start; }
.viewtabs button { position: relative; z-index: 0; height: 17px; margin-left: 7px; font-size: 10px; text-align: left; padding-left: 1px; white-space: nowrap; background: #d2d8ec; border: 1px solid #a0a8ba; border-width: 0 1px 1px 0; border-radius: 0 0 3px 0; }
.viewtabs button::before { content: ""; position: absolute; z-index: -1; left: -3px; top: 0; width: 6px; height: 17px; background: inherit; border: 1px solid #a0a8ba; border-width: 0 0 1px 1px; transform: skewX(22deg); }
.viewtabs .on { background: #fff; }
.viewtabs button:last-child { background: #e2e5ec; }
.viewtabs svg { width: 10px; height: 10px; margin-left: 2px; }

.panels { flex: 0 0 243px; display: flex; flex-direction: column; padding: 6px 0 4px 6px; gap: 10px; }
.panel { display: flex; flex-direction: column; min-height: 0; background: #fff; border: 1px solid #98a2b4; }
.layers { flex: 0 0 308px; }
.props { flex: 1; background: #f4f5f8; }
.ptabs { flex: 0 0 17px; display: flex; align-items: end; background: #dfe2ea; border-bottom: 1px solid #a4adbf; }
.ptabs button { position: relative; z-index: 0; display: flex; align-items: center; gap: 2px; height: 17px; margin-bottom: -1px; padding: 0 6px 0 3px; font-size: 10px; background: #d3d9ec; border-top: 1px solid #a4adbf; }
.ptabs button::after { content: ""; position: absolute; z-index: -1; right: -7px; top: -1px; width: 14px; height: 17px; background: inherit; border: 1px solid #a4adbf; border-width: 1px 1px 0 0; transform: skewX(38deg); }
.ptabs button + button { padding-left: 6px; }
.ptabs button:first-child { z-index: 2; }
.ptabs button:nth-child(2) { z-index: 1; }
.ptabs button svg { width: 13px; height: 13px; }
.ptabs .cog { width: 13px; height: 13px; margin-left: auto; }
.ptools { flex: 0 0 19px; background: #fcfcfe; border-bottom: 1px solid #a4adbf; display: grid; grid-template-columns: repeat(10, 1fr); align-items: center; justify-items: center; padding-right: 60px; }
.ptools svg { width: 14px; height: 14px; }
.ptools button { width: 14px; height: 14px; }
.layers table { width: 100%; table-layout: fixed; border-collapse: collapse; margin-bottom: auto; }
.c-name { width: 101px; } .c-cur { width: 51px; } .c-i { width: 15px; }
.layers th { height: 20px; padding: 0 0 0 5px; font-weight: 400; text-align: left; border-right: 1px solid #e2e4e8; }
.layers th.mid, .layers td.mid { text-align: center; padding: 0; }
.layers th.mat { padding: 0 0 0 4px; border: 0; white-space: nowrap; }
.layers td { height: 14px; line-height: 12px; padding: 0 0 1px 1px; font-size: 10px; border-bottom: 1px dotted #e8e8e8; }
.layers td:first-child { padding-left: 3px; }
.layers td svg { width: 11px; height: 11px; }
.layers td.mid svg { margin: auto; }
.layers tr td.l1 { padding-left: 17px; } .layers tr td.l2 { padding-left: 28px; }
.strong { font-weight: 700; }
.tw { width: 8px; height: 8px; margin: 0 5px 0 2px; border: 1px solid #789; font-size: 8px; line-height: 6px; vertical-align: middle; }
.sel { background: #0a74d6; color: #fff; }
.sel .sw { outline: 1px solid #fff; outline-offset: -1px; }
.sw { display: block; flex: none; width: 10px; height: 10px; background: #000; }
.pick .sw { width: 11px; height: 11px; }
.sw.open { background: #fff; border: 1px solid #000; }
.ball { display: block; width: 10px; height: 10px; border: 1px solid #e4e4e4; border-radius: 50%; background: #fff; }
.xscroll { flex: 0 0 14px; display: flex; align-items: center; gap: 2px; padding: 0 2px; background: #eee; }
.xscroll i { width: 118px; height: 13px; margin-right: auto; background: #c8c8c8; }
.ptypes { display: flex; gap: 3px; padding: 4px 3px 8px; }
.ptypes button { width: 22px; height: 22px; padding: 0; border: 1px solid #aaa; background: #dcdcdc; }
.ptypes .on { border-color: #0a64b8; background: #cfe6f8; }
.ptypes svg { width: 20px; height: 20px; }
.pbody { flex: 1; min-height: 0; display: flex; gap: 4px; padding: 0 4px 0 3px; }
.rows { flex: 1; min-width: 0; overflow: hidden; background: #eee; border-right: 1px solid #dde; }
.rows h2 { height: 19px; padding: 0 2px; line-height: 19px; background: #eee; }
.row { display: grid; grid-template-columns: 99px 1fr; column-gap: 1px; height: 16px; padding: 0 0 1px 7px; background: #e2e4ec; line-height: 15px; box-shadow: inset 7px 0 #eee; }
.row > * { min-width: 0; padding-left: 3px; background: #fff; }
.off > :first-child { color: #666; }
.off > :last-child { background: #dfe2ea; color: #666; }
.off > .adjust { background: #c6c6c6; }
.pick { display: flex; align-items: center; gap: 3px; }
.pick select { appearance: none; flex: 1; min-width: 0; height: 15px; }
.pick b, .end button { width: 14px; height: 15px; background: #e8e8e8; border: 1px solid #bbb; display: grid; place-items: center; line-height: 6px; }
.pick b svg { width: 10px; height: 10px; }
.pick .dia { width: 11px; height: 11px; }
.end { justify-content: flex-end; }
input[type="checkbox"] { appearance: none; position: relative; flex: none; width: 11px; height: 11px; border: 1px solid #222; background: #fff; }
input[type="checkbox"]:checked::after { content: ""; position: absolute; left: 1px; top: 1px; width: 7px; height: 4px; border: 1px solid #111; border-width: 0 0 1px 1px; transform: rotate(-48deg); }
input[type="checkbox"]:disabled { border-color: #bbb; }
.row input[type="checkbox"] { display: block; margin-top: 1px; }
input[type="checkbox"].dim { border-color: #b8b8b8; background: #d8dade; }
.yscroll { flex: 0 0 12px; display: flex; flex-direction: column; align-items: center; gap: 2px; background: #eee; }
.yscroll i { flex: 0 1 195px; width: 12px; margin-bottom: auto; background: #c8c8c8; }

.osnap { flex: 0 0 31px; display: grid; grid-template-columns: 37px 40px 41px 35px 37px 31px 39px 37px 43px 39px 46px 49px auto; justify-content: start; align-items: center; margin-left: 2px; padding: 0 0 5px 5px; border-left: 2px solid #cdd2dc; }
.osnap label { display: flex; align-items: center; gap: 4px; white-space: nowrap; }
.status { flex: 0 0 15px; display: grid; grid-template-columns: 47px 74px 74px 74px 73px 145px 63px 40px 45px 45px 71px 56px 91px 38px 1fr 22px; border-top: 1px solid #98a2b4; font-size: 10px; line-height: 14px; overflow: hidden; }
.status > * { display: flex; align-items: center; justify-content: center; height: 15px; border-right: 1px solid #a4adbf; white-space: nowrap; padding-top: 1px; }
.status .lay, .status .tol { justify-content: flex-start; gap: 2px; padding-left: 3px; }
.status .on { font-weight: 700; background: #e2f2fc; }
.status > :last-child { border-right: 0; }
```
FILE: app.js
```js
// Ground-plane grid: 14 major divisions per side of the origin, 5 minor steps each.
const origin = [666, 471], vx = [-1697, -420], vy = [1670, -430];
const EX = 0.176, EY = 0.256, N = 70;
const project = (u, v) => {
  const a = u * EX, b = v * EY, w = 1 + a + b;
  return [0, 1].map(i => ((origin[i] + a * vx[i] + b * vy[i]) / w).toFixed(1)).join(" ");
};
const paths = { minor: "", major: "" };
for (let i = -N; i <= N; i++) {
  const t = i / N;
  paths[i % 5 ? "minor" : "major"] += `M${project(t, -1)}L${project(t, 1)}M${project(-1, t)}L${project(1, t)}`;
}
for (const id in paths) document.getElementById(id).setAttribute("d", paths[id]);

const cmd = document.getElementById("cmd");
cmd.focus();
cmd.setSelectionRange(5, 10);
```
